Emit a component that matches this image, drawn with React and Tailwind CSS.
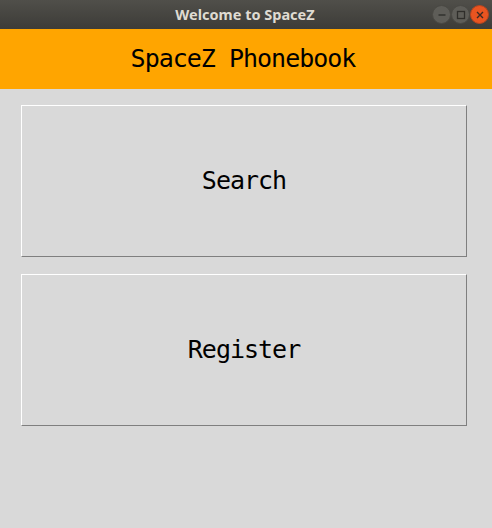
import React from 'react';

const mono = { fontFamily: '"DejaVu Sans Mono", monospace' };

function WinButton({ kind }) {
  if (kind === 'close') {
    return (
      <div className="w-[19px] h-[19px] rounded-full bg-[#e95420] border border-[#b8451f] flex items-center justify-center">
        <svg width="8" height="8" viewBox="0 0 8 8">
          <path d="M1 1 L7 7 M7 1 L1 7" stroke="#3c2a22" strokeWidth="1.4" />
        </svg>
      </div>
    );
  }
  return (
    <div className="w-[19px] h-[19px] rounded-full bg-[#5e5d58] border border-[#4a4944] flex items-center justify-center">
      <svg width="10" height="10" viewBox="0 0 10 10">
        {kind === 'min' ? (
          <path d="M1.5 5 H8.5" stroke="#2f2e2b" strokeWidth="1.4" />
        ) : (
          <rect x="1.5" y="1.5" width="7" height="7" fill="none" stroke="#2f2e2b" strokeWidth="1.3" />
        )}
      </svg>
    </div>
  );
}

function BigButton({ label }) {
  return (
    <button
      className="w-[446px] h-[152px] bg-[#d9d9d9] border border-t-white border-l-white border-r-[#7f7f7f] border-b-[#7f7f7f] flex items-center justify-center text-black text-[25px] tracking-[-1px]"
      style={mono}
    >
      {label}
    </button>
  );
}

export default function App() {
  return (
    <div className="w-[492px] h-[528px] bg-[#d9d9d9] flex flex-col overflow-hidden">
      {/* window title bar */}
      <div className="h-[29px] shrink-0 bg-gradient-to-b from-[#504f4a] to-[#3d3c38] relative flex items-center justify-center">
        <span
          className="text-[14.5px] font-bold text-[#dfdbd2] pr-[2px]"
          style={{ fontFamily: '"Noto Sans", sans-serif' }}
        >
          Welcome to SpaceZ
        </span>
        <div className="absolute right-[3px] top-[5px] flex">
          <WinButton kind="min" />
          <WinButton kind="max" />
          <WinButton kind="close" />
        </div>
      </div>

      <div className="h-[60px] shrink-0 bg-[#ffa500] flex items-center justify-center">
        <span className="text-[25px] tracking-[-1px] text-black pr-[6px]" style={mono}>
          SpaceZ Phonebook
        </span>
      </div>

      <div className="flex flex-col gap-[17px] pt-4 pl-[21px]">
        <BigButton label="Search" />
        <BigButton label="Register" />
      </div>
    </div>
  );
}
